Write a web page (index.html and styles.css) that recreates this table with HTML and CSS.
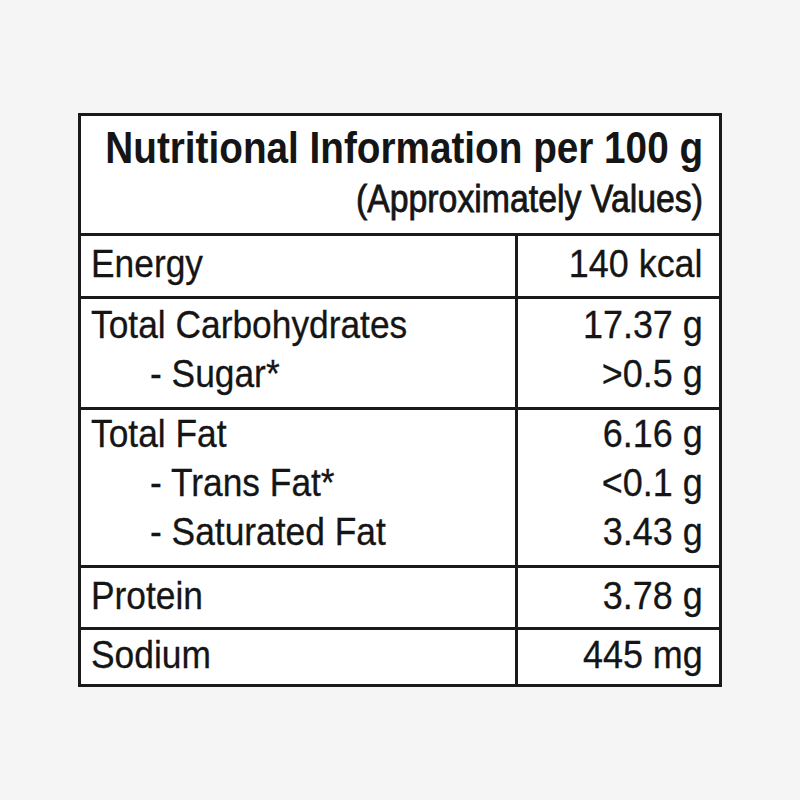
FILE: index.html
```html
<!DOCTYPE html>
<html lang="en">
<head>
<meta charset="utf-8">
<title>Nutritional Information</title>
<link rel="stylesheet" href="styles.css">
</head>
<body>
<div class="label">
  <div class="head">
    <div class="title"><span class="nx nx-r">Nutritional Information per 100 g</span></div>
    <div class="sub"><span class="nx nx-r">(Approximately Values)</span></div>
  </div>

  <div class="row row-energy">
    <div class="name"><div class="ln"><span class="nx">Energy</span></div></div>
    <div class="val"><div class="ln"><span class="nx nx-r">140 kcal</span></div></div>
  </div>

  <div class="row row-carb">
    <div class="name">
      <div class="ln"><span class="nx">Total Carbohydrates</span></div>
      <div class="ln"><span class="nx indent">- Sugar*</span></div>
    </div>
    <div class="val">
      <div class="ln"><span class="nx nx-r">17.37 g</span></div>
      <div class="ln"><span class="nx nx-r">&gt;0.5 g</span></div>
    </div>
  </div>

  <div class="row row-fat">
    <div class="name">
      <div class="ln"><span class="nx">Total Fat</span></div>
      <div class="ln"><span class="nx indent">- Trans Fat*</span></div>
      <div class="ln"><span class="nx indent">- Saturated Fat</span></div>
    </div>
    <div class="val">
      <div class="ln"><span class="nx nx-r">6.16 g</span></div>
      <div class="ln"><span class="nx nx-r">&lt;0.1 g</span></div>
      <div class="ln"><span class="nx nx-r">3.43 g</span></div>
    </div>
  </div>

  <div class="row row-protein">
    <div class="name"><div class="ln"><span class="nx">Protein</span></div></div>
    <div class="val"><div class="ln"><span class="nx nx-r">3.78 g</span></div></div>
  </div>

  <div class="row row-sodium">
    <div class="name"><div class="ln"><span class="nx">Sodium</span></div></div>
    <div class="val"><div class="ln"><span class="nx nx-r">445 mg</span></div></div>
  </div>
</div>
</body>
</html>
```

FILE: styles.css
```css
html, body {
  margin: 0;
  padding: 0;
}

body {
  background: #f5f5f5;
  font-family: "Liberation Sans", Arial, sans-serif;
  color: #151515;
  width: 800px;
  height: 800px;
  overflow: hidden;
}

.label {
  box-sizing: border-box;
  width: 644px;
  margin: 113px 0 0 78px;
  background: #ffffff;
  border: 3px solid #1a1a1a;
}

.nx {
  display: inline-block;
  white-space: pre;
  transform: scaleX(0.93);
  transform-origin: left center;
  -webkit-text-stroke: 0.3px #151515;
}

.nx-r {
  transform-origin: right center;
}

/* header */
.head {
  padding: 9px 16px 9px 10px;
  border-bottom: 3px solid #1a1a1a;
}

.title,
.sub {
  display: flex;
  justify-content: flex-end;
}

.title {
  font-size: 45px;
  line-height: 45px;
  font-weight: 700;
}

.title .nx {
  transform: scaleX(0.86);
  -webkit-text-stroke: 0;
}

.sub {
  margin-top: 5px;
  font-size: 38px;
  line-height: 49px;
  font-weight: 400;
}

.sub .nx {
  transform: scaleX(0.89);
  -webkit-text-stroke: 0.8px #151515;
}

/* rows */
.row {
  display: grid;
  grid-template-columns: 434px 1fr;
  font-size: 38px;
  line-height: 49px;
  border-top: 3px solid #1a1a1a;
}

.row-energy {
  border-top: none;
}

.name {
  padding-left: 10px;
}

.val {
  border-left: 3px solid #1a1a1a;
  padding-right: 16px;
  text-align: right;
}

.val .nx {
  transform: scaleX(0.945);
}

.indent {
  margin-left: 59px;
}

.row-energy .name, .row-energy .val { padding-top: 4px; padding-bottom: 7px; }
.row-carb .name, .row-carb .val { padding-top: 2px; padding-bottom: 8px; }
.row-fat .name, .row-fat .val { padding-top: 0; padding-bottom: 8px; }
.row-protein .name, .row-protein .val { padding-top: 4px; padding-bottom: 6px; }
.row-sodium .name, .row-sodium .val { padding-top: 1px; padding-bottom: 4px; }
```
